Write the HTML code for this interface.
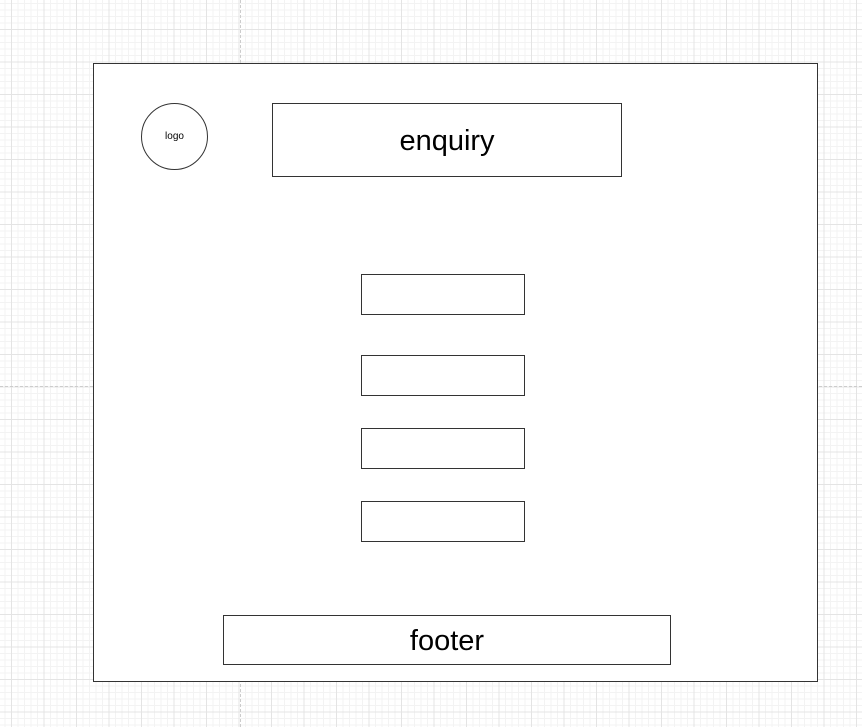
<!DOCTYPE html>
<html><head><meta charset="utf-8"><style>
html,body{margin:0;padding:0}
body{width:862px;height:727px;position:relative;overflow:hidden;background-color:#fff;
background-image:
linear-gradient(to right,#e4e4e4 1px,transparent 1px),
linear-gradient(to bottom,#e4e4e4 1px,transparent 1px),
linear-gradient(to right,#f3f3f3 1px,transparent 1px),
linear-gradient(to bottom,#f3f3f3 1px,transparent 1px);
background-size:32.5px 32.5px,32.5px 32.5px,6.5px 6.5px,6.5px 6.5px;
background-position:11px 29px,11px 29px,11px 29px,11px 29px;
font-family:"Liberation Sans",Arial,sans-serif;}
.dv{position:absolute;left:240px;top:0;width:0;height:727px;border-left:1px dashed #ccc}
.dh{position:absolute;top:386px;left:0;height:0;width:862px;border-top:1px dashed #ccc}
.b{position:absolute;box-sizing:border-box;border:1px solid #333;background:#fff;display:flex;align-items:center;justify-content:center;color:#000}
</style></head><body>
<div class="dv"></div><div class="dh"></div>
<div class="b" style="left:93px;top:63px;width:725px;height:619px"></div>
<div class="b" style="left:141px;top:103px;width:67px;height:67px;border-radius:50%;font-size:10px">logo</div>
<div class="b" style="left:272px;top:103px;width:350px;height:74px;font-size:29px;padding-top:3px">enquiry</div>
<div class="b" style="left:361px;top:274px;width:164px;height:41px"></div>
<div class="b" style="left:361px;top:355px;width:164px;height:41px"></div>
<div class="b" style="left:361px;top:428px;width:164px;height:41px"></div>
<div class="b" style="left:361px;top:501px;width:164px;height:41px"></div>
<div class="b" style="left:223px;top:615px;width:448px;height:50px;font-size:29px;padding-top:2px">footer</div>
</body></html>
